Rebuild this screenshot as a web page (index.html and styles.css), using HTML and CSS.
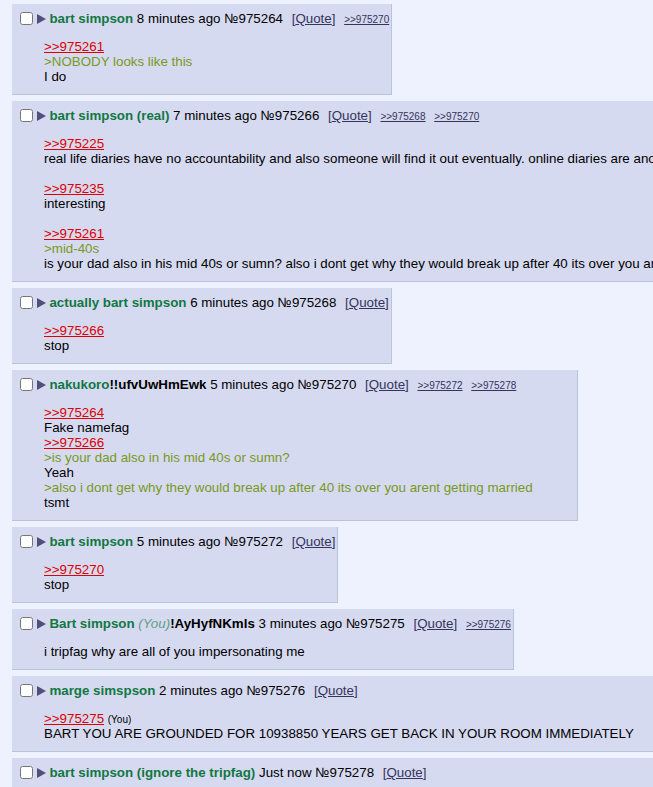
FILE: index.html
```html
<!DOCTYPE html>
<html lang="en">
  <head>
    <meta charset="UTF-8" />
    <meta name="viewport" content="width=device-width, initial-scale=1.0" />
    <title>Thread</title>
    <link rel="stylesheet" href="styles.css">
  </head>
  <body>
    <div class="thread">

      <div class="post">
        <div class="post-info">
          <input type="checkbox" class="post-check">
          <svg class="menu-arrow" width="9" height="10" viewBox="0 0 9 10"><polygon points="0,0 9,5 0,10" /></svg>
          <span class="name">bart simpson</span>
          <span class="date">8 minutes ago</span>
          <span class="post-no">№975264</span>
          <a class="quote-btn" href="#">[<u>Quote</u>]</a>
          <a class="backlink" href="#">&gt;&gt;975270</a>
        </div>
        <blockquote class="message">
          <a class="quotelink" href="#">&gt;&gt;975261</a><br>
          <span class="greentext">&gt;NOBODY looks like this</span><br>
          I do
        </blockquote>
      </div>

      <div class="post">
        <div class="post-info">
          <input type="checkbox" class="post-check">
          <svg class="menu-arrow" width="9" height="10" viewBox="0 0 9 10"><polygon points="0,0 9,5 0,10" /></svg>
          <span class="name">bart simpson (real)</span>
          <span class="date">7 minutes ago</span>
          <span class="post-no">№975266</span>
          <a class="quote-btn" href="#">[<u>Quote</u>]</a>
          <a class="backlink" href="#">&gt;&gt;975268</a>
          <a class="backlink" href="#">&gt;&gt;975270</a>
        </div>
        <blockquote class="message">
          <a class="quotelink" href="#">&gt;&gt;975225</a><br>
          real life diaries have no accountability and also someone will find it out eventually. online diaries are anonymous<br>
          <br>
          <a class="quotelink" href="#">&gt;&gt;975235</a><br>
          interesting<br>
          <br>
          <a class="quotelink" href="#">&gt;&gt;975261</a><br>
          <span class="greentext">&gt;mid-40s</span><br>
          is your dad also in his mid 40s or sumn? also i dont get why they would break up after 40 its over you arent getting married
        </blockquote>
      </div>

      <div class="post">
        <div class="post-info">
          <input type="checkbox" class="post-check">
          <svg class="menu-arrow" width="9" height="10" viewBox="0 0 9 10"><polygon points="0,0 9,5 0,10" /></svg>
          <span class="name">actually bart simpson</span>
          <span class="date">6 minutes ago</span>
          <span class="post-no">№975268</span>
          <a class="quote-btn" href="#">[<u>Quote</u>]</a>
        </div>
        <blockquote class="message">
          <a class="quotelink" href="#">&gt;&gt;975266</a><br>
          stop
        </blockquote>
      </div>

      <div class="post">
        <div class="post-info">
          <input type="checkbox" class="post-check">
          <svg class="menu-arrow" width="9" height="10" viewBox="0 0 9 10"><polygon points="0,0 9,5 0,10" /></svg>
          <span class="name">nakukoro</span><span class="trip">!!ufvUwHmEwk</span>
          <span class="date">5 minutes ago</span>
          <span class="post-no">№975270</span>
          <a class="quote-btn" href="#">[<u>Quote</u>]</a>
          <a class="backlink" href="#">&gt;&gt;975272</a>
          <a class="backlink" href="#">&gt;&gt;975278</a>
        </div>
        <blockquote class="message">
          <a class="quotelink" href="#">&gt;&gt;975264</a><br>
          Fake namefag<br>
          <a class="quotelink" href="#">&gt;&gt;975266</a><br>
          <span class="greentext">&gt;is your dad also in his mid 40s or sumn?</span><br>
          Yeah<br>
          <span class="greentext">&gt;also i dont get why they would break up after 40 its over you arent getting married</span><br>
          tsmt
        </blockquote>
      </div>

      <div class="post">
        <div class="post-info">
          <input type="checkbox" class="post-check">
          <svg class="menu-arrow" width="9" height="10" viewBox="0 0 9 10"><polygon points="0,0 9,5 0,10" /></svg>
          <span class="name">bart simpson</span>
          <span class="date">5 minutes ago</span>
          <span class="post-no">№975272</span>
          <a class="quote-btn" href="#">[<u>Quote</u>]</a>
        </div>
        <blockquote class="message">
          <a class="quotelink" href="#">&gt;&gt;975270</a><br>
          stop
        </blockquote>
      </div>

      <div class="post">
        <div class="post-info">
          <input type="checkbox" class="post-check">
          <svg class="menu-arrow" width="9" height="10" viewBox="0 0 9 10"><polygon points="0,0 9,5 0,10" /></svg>
          <span class="name">Bart simpson <span class="you">(You)</span></span><span class="trip">!AyHyfNKmls</span>
          <span class="date">3 minutes ago</span>
          <span class="post-no">№975275</span>
          <a class="quote-btn" href="#">[<u>Quote</u>]</a>
          <a class="backlink" href="#">&gt;&gt;975276</a>
        </div>
        <blockquote class="message">
          i tripfag why are all of you impersonating me
        </blockquote>
      </div>

      <div class="post">
        <div class="post-info">
          <input type="checkbox" class="post-check">
          <svg class="menu-arrow" width="9" height="10" viewBox="0 0 9 10"><polygon points="0,0 9,5 0,10" /></svg>
          <span class="name">marge simspson</span>
          <span class="date">2 minutes ago</span>
          <span class="post-no">№975276</span>
          <a class="quote-btn" href="#">[<u>Quote</u>]</a>
        </div>
        <blockquote class="message">
          <a class="quotelink" href="#">&gt;&gt;975275</a> <span class="you-mark">(You)</span><br>
          BART YOU ARE GROUNDED FOR 10938850 YEARS GET BACK IN YOUR ROOM IMMEDIATELY
        </blockquote>
      </div>

      <div class="post">
        <div class="post-info">
          <input type="checkbox" class="post-check">
          <svg class="menu-arrow" width="9" height="10" viewBox="0 0 9 10"><polygon points="0,0 9,5 0,10" /></svg>
          <span class="name">bart simpson (ignore the tripfag)</span>
          <span class="date">Just now</span>
          <span class="post-no">№975278</span>
          <a class="quote-btn" href="#">[<u>Quote</u>]</a>
        </div>
        <blockquote class="message">
          <a class="quotelink" href="#">&gt;&gt;975270</a><br>
          i was here first and everyone in this thread already knows that the tripfag is the real impersonator here, not me
        </blockquote>
      </div>

    </div>
  </body>
</html>
```

FILE: styles.css
```css
html {
  overflow: hidden;
}
body {
  font-family: "Liberation Sans", Arial, Helvetica, sans-serif;
  font-size: 13.33px;
  line-height: 15px;
  color: #000;
  background-color: #eef2ff;
  margin: 4px 0 0 12px;
}
a {
  color: #34345c;
}
.thread {
  display: flex;
  flex-direction: column;
  align-items: flex-start;
  gap: 6px;
}
.post {
  width: max-content;
  background: #d6daf0;
  border-right: 1px solid #b7c5d9;
  border-bottom: 1px solid #b7c5d9;
  padding: 7px 2px 10px 8px;
}
.post-info {
  height: 15px;
  white-space: nowrap;
}
.post-check {
  width: 13px;
  height: 13px;
  margin: 0;
  vertical-align: -2px;
}
.menu-arrow {
  fill: #50507e;
  vertical-align: -1px;
}
.name {
  color: #117743;
  font-weight: bold;
}
.you {
  color: #609e88;
  font-style: italic;
  font-weight: normal;
}
.trip {
  font-weight: bold;
}
/* [Quote] button: only the word is underlined */
.quote-btn {
  text-decoration: none;
  margin-left: 5px;
}
.backlink {
  font-size: 10px;
  margin-left: 5px;
}
.message {
  margin: 13px 42px 0 24px;
  white-space: nowrap;
}
.quotelink {
  color: #dd0000;
}
.greentext {
  color: #789922;
}
.you-mark {
  font-size: 10px;
  line-height: 1;
}
```
